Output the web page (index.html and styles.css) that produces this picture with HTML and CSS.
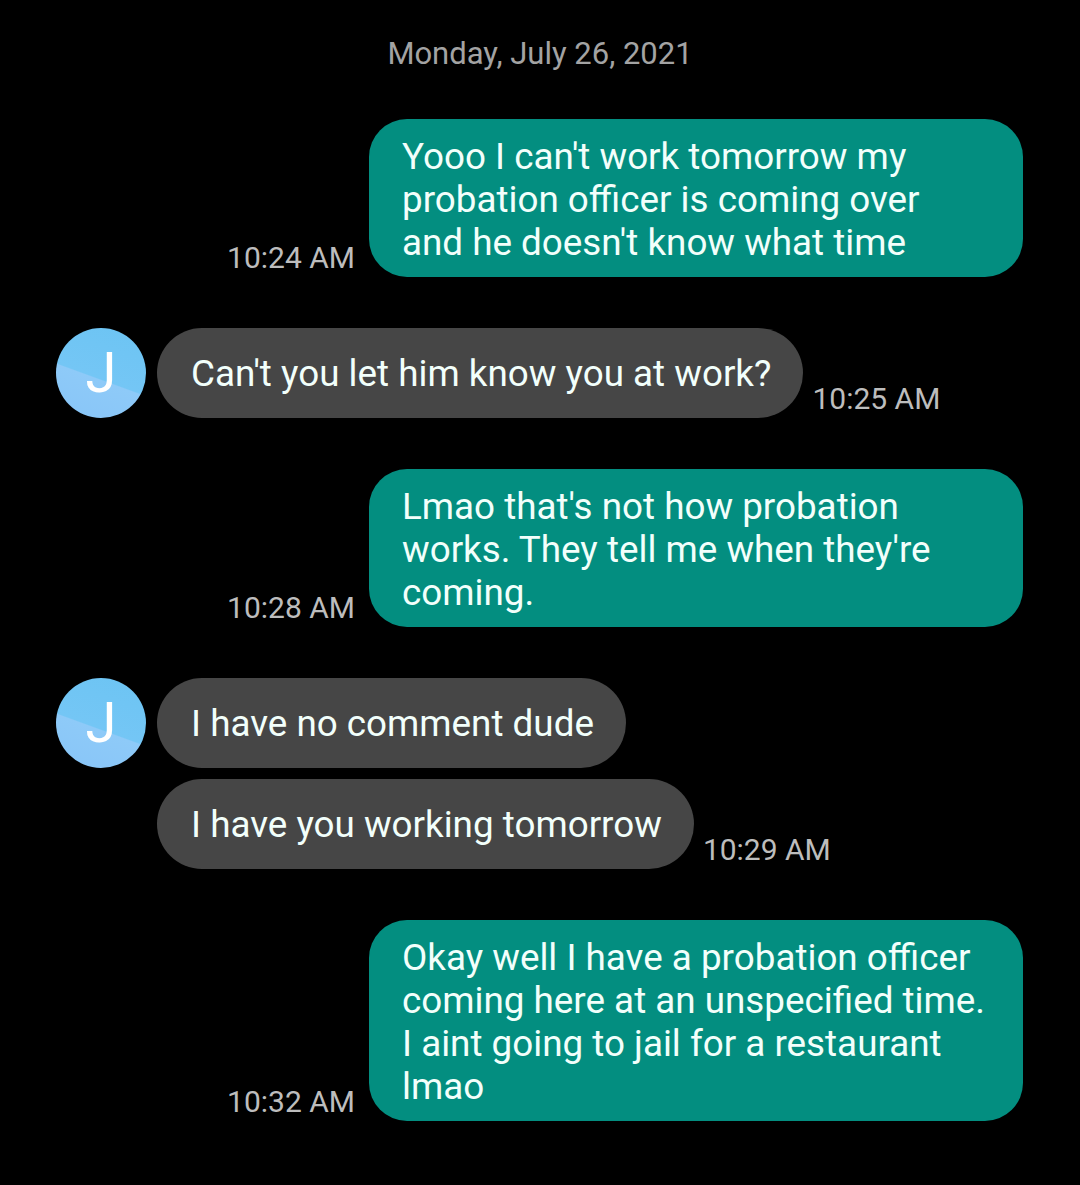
FILE: index.html
```html
<!DOCTYPE html>
<html>
<head>
<meta charset="utf-8">
<link rel="stylesheet" href="styles.css">
</head>
<body>
<div class="chat">
  <div class="date">Monday, July 26, 2021</div>

  <div class="row sent">
    <span class="ts">10:24 AM</span>
    <div class="bubble out">Yooo I can't work tomorrow my<br>probation officer is coming over<br>and he doesn't know what time</div>
  </div>

  <div class="row received">
    <div class="avatar">J</div>
    <div class="stack">
      <div class="line">
        <div class="bubble in">Can't you let him know you at work?</div>
        <span class="ts">10:25 AM</span>
      </div>
    </div>
  </div>

  <div class="row sent">
    <span class="ts">10:28 AM</span>
    <div class="bubble out">Lmao that's not how probation<br>works. They tell me when they're<br>coming.</div>
  </div>

  <div class="row received">
    <div class="avatar">J</div>
    <div class="stack">
      <div class="line">
        <div class="bubble in">I have no comment dude</div>
      </div>
      <div class="line">
        <div class="bubble in">I have you working tomorrow</div>
        <span class="ts">10:29 AM</span>
      </div>
    </div>
  </div>

  <div class="row sent">
    <span class="ts">10:32 AM</span>
    <div class="bubble out">Okay well I have a probation officer<br>coming here at an unspecified time.<br>I aint going to jail for a restaurant<br>lmao</div>
  </div>
</div>
</body>
</html>
```

FILE: styles.css
```css
html, body {
  margin: 0;
  padding: 0;
  background: #000;
}

body {
  width: 1080px;
  height: 1185px;
  overflow: hidden;
  font-family: Roboto, "Noto Sans", "Liberation Sans", sans-serif;
  color: #fff;
}

.chat {
  display: flex;
  flex-direction: column;
  gap: 51px;
  padding-top: 34px;
}

.date {
  text-align: center;
  font-size: 31px;
  line-height: 40px;
  color: #a3a3a3;
  margin-bottom: -6px;
}

.row {
  display: flex;
  align-items: flex-end;
}

.row.sent {
  justify-content: flex-end;
  gap: 14px;
  padding-right: 57px;
}

.ts {
  font-size: 30px;
  line-height: 32px;
  color: #bdbdbd;
  padding-bottom: 3px;
  white-space: nowrap;
}

.bubble {
  font-size: 36.8px;
  line-height: 43px;
  color: #f2fffb;
  box-sizing: border-box;
}

.bubble.out {
  width: 654px;
  background: #038e80;
  border-radius: 38px;
  padding: 16px 30px 13px 33px;
  white-space: nowrap;
}

.row.received {
  align-items: flex-start;
  gap: 11px;
  padding-left: 56px;
}

.avatar {
  width: 90px;
  height: 90px;
  border-radius: 50%;
  flex: none;
  background: linear-gradient(200deg, #6cc4f3 0%, #74c6f5 55%, #8ecaf8 56%, #88c5f8 100%);
  color: #fff;
  font-size: 56px;
  font-weight: 400;
  display: flex;
  align-items: center;
  justify-content: center;
}

.stack {
  display: flex;
  flex-direction: column;
  gap: 11px;
}

.line {
  display: flex;
  align-items: flex-end;
  gap: 9px;
}

.bubble.in {
  min-height: 90px;
  display: flex;
  align-items: center;
  background: #464646;
  border-radius: 45px;
  padding: 0 32px 0 34px;
  white-space: nowrap;
}
```
